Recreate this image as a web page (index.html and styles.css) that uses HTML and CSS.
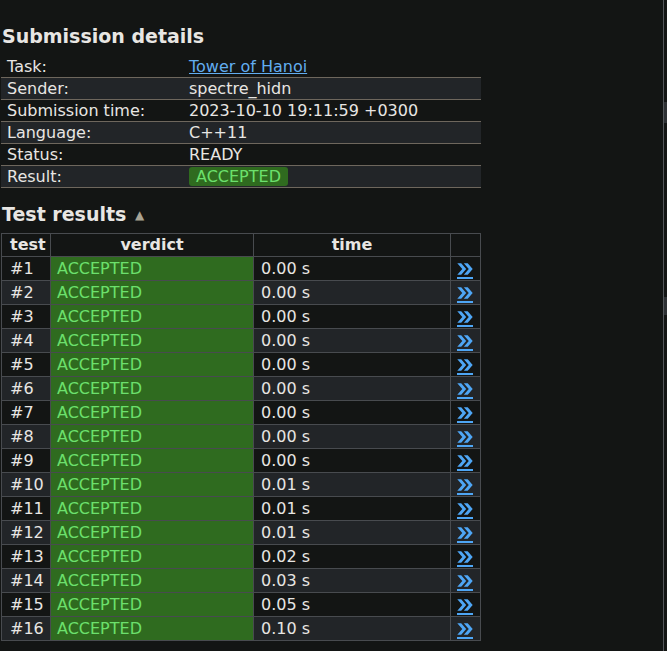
FILE: index.html
```html
<!DOCTYPE html>
<html>
<head>
<meta charset="utf-8">
<link rel="stylesheet" href="styles.css">
</head>
<body>
<div class="page">
  <main class="content">
    <h2 class="title">Submission details</h2>
    <table class="details">
      <tr><td class="label">Task:</td><td><a class="link" href="#">Tower of Hanoi</a></td></tr>
      <tr class="alt"><td class="label">Sender:</td><td>spectre_hidn</td></tr>
      <tr><td class="label">Submission time:</td><td>2023-10-10 19:11:59 +0300</td></tr>
      <tr class="alt"><td class="label">Language:</td><td>C++11</td></tr>
      <tr><td class="label">Status:</td><td>READY</td></tr>
      <tr class="alt"><td class="label">Result:</td><td><span class="badge">ACCEPTED</span></td></tr>
    </table>

    <h2 class="title title-results">Test results <span class="caret">&#9650;</span></h2>
    <table class="results">
      <thead>
        <tr><th class="c-test">test</th><th class="c-verdict">verdict</th><th class="c-time">time</th><th class="c-link"></th></tr>
      </thead>
      <tbody id="rows"></tbody>
    </table>
  </main>
  <aside class="edge">
    <div class="edge-gap1"></div>
    <div class="edge-mark1"></div>
    <div class="edge-gap2"></div>
    <div class="edge-mark2"></div>
  </aside>
</div>
<script src="script.js"></script>
</body>
</html>
```

FILE: script.js
```js
var times = ["0.00","0.00","0.00","0.00","0.00","0.00","0.00","0.00","0.00","0.01","0.01","0.01","0.02","0.03","0.05","0.10"];
var tb = document.getElementById("rows");
var icon = '<svg width="16" height="12" viewBox="0 0 16 12"><path d="M0.3 0.3h3.9l5 5.7-5 5.7h-3.9l5-5.7z M6.8 0.3h3.9l5 5.7-5 5.7h-3.9l5-5.7z" fill="#4ea6f5"/></svg>';
var html = "";
for (var i = 0; i < times.length; i++) {
  html += '<tr class="' + (i % 2 ? 'alt' : '') + '"><td class="c-test">#' + (i + 1) + '</td><td class="verdict">ACCEPTED</td><td class="c-time">' + times[i] + ' s</td><td class="c-link"><a class="more" href="#">' + icon + '</a></td></tr>';
}
tb.innerHTML = html;
```

FILE: styles.css
```css
html, body {
  margin: 0;
  padding: 0;
  background: #131514;
}
body {
  color: #e8e6e3;
  font-family: "DejaVu Sans", Verdana, sans-serif;
  font-size: 16px;
}
.page {
  display: flex;
  min-height: 651px;
}
.content {
  width: 664px;
  padding: 0 0 0 1px;
  box-sizing: border-box;
}
.edge {
  width: 3px;
  border-left: 1px solid #54575b;
  display: flex;
  flex-direction: column;
}
.edge-gap1 { height: 102px; }
.edge-mark1 { height: 21px; background: #2e3134; }
.edge-gap2 { height: 174px; }
.edge-mark2 { height: 18px; background: #2e3134; }

.title {
  font-size: 19px;
  font-weight: bold;
  margin: 25px 0 8px 1px;
  line-height: 23px;
}
.title-results {
  margin-top: 15px;
  margin-bottom: 6px;
}
.caret {
  font-size: 12px;
  color: #a8a394;
  vertical-align: 2px;
  margin-left: 2px;
}
.details {
  border-collapse: collapse;
  width: 480px;
  table-layout: fixed;
}
.details td {
  height: 21px;
  padding: 0 6px;
  border-bottom: 1px solid #6e675d;
  line-height: 21px;
  white-space: nowrap;
}
.details td.label {
  width: 170px;
}
.details tr.alt td {
  background: #222528;
}
.link {
  color: #62adf0;
  text-decoration: underline;
}
.badge {
  display: inline-block;
  background: #2f6b1f;
  color: #6ce06c;
  border-radius: 3px;
  padding: 0 7px;
  line-height: 19px;
}
.results {
  border-collapse: collapse;
  width: 480px;
  table-layout: fixed;
}
.results th, .results td {
  border: 1px solid #484b4f;
  padding: 0 8px;
  white-space: nowrap;
}
.results th {
  height: 22px;
  line-height: 22px;
  font-weight: bold;
  text-align: center;
  background: #131514;
}
.results td {
  height: 23px;
  line-height: 23px;
}
.results tr.alt td {
  background: #222528;
}
.results .c-test { width: 32px; }
.results .c-verdict, .results .verdict { width: 186px; }
.results .c-time { width: 180px; }
.results .c-link { width: 13px; }
.results td.c-test { padding-left: 8px; }
.results td.verdict,
.results tr.alt td.verdict {
  background: #2f6b1f;
  color: #6ce06c;
  padding-left: 6px;
}
.results td.c-time { padding-left: 7px; }
.results td.c-link { padding: 0 0 0 6px; }
.more {
  display: inline-block;
  border-bottom: 2px solid #4ea6f5;
  line-height: 0;
  padding-bottom: 2px;
  vertical-align: -1px;
}
```
